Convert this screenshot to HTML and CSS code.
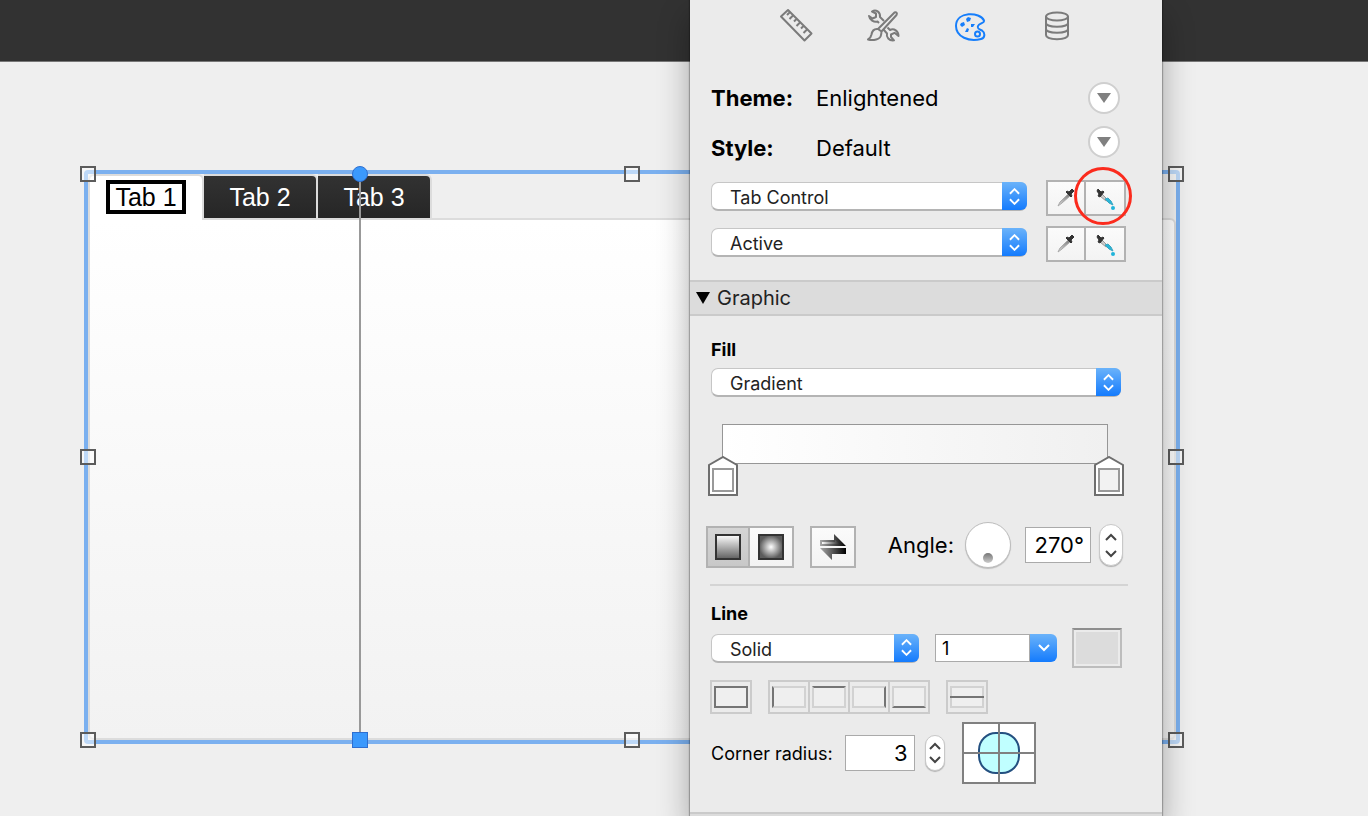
FILE: index.html
```
<!DOCTYPE html>
<html lang="en">
<head>
  <meta charset="UTF-8">
  <meta name="viewport" content="width=device-width, initial-scale=1.0">
  <title>Layout Inspector</title>
  <link rel="stylesheet" href="styles.css">
</head>
<body>
  <header class="layout-header"></header>

  <main class="canvas">
    <div class="tab-control">
      <div class="tabs">
        <button class="tab active"><span>Tab 1</span></button>
        <button class="tab">Tab 2</button>
        <button class="tab">Tab 3</button>
      </div>
      <div class="tab-body"></div>

      <!-- selection handles -->
      <div class="guide"></div>
      <i class="handle top left"></i>
      <i class="handle top center"></i>
      <i class="handle top right"></i>
      <i class="handle middle left"></i>
      <i class="handle middle right"></i>
      <i class="handle bottom left"></i>
      <i class="handle bottom center"></i>
      <i class="handle bottom right"></i>
    </div>
  </main>

  <aside class="inspector">
    <nav class="modes">
      <button aria-label="Position">
        <svg width="34" height="34" viewBox="0 0 34 34"><path d="M2 8.500 L9 2 L32.500 25.500 L25.500 32.500 Z M10.500 4.500 L8 7 M14 7.500 L10.500 11 M17.500 11 L15 13.500 M21 14.500 L17.500 18 M24.500 18 L22 20.500 M28 21.500 L24.500 25"/></svg>
      </button>
      <button aria-label="Styles">
        <svg width="34" height="34" viewBox="0 0 34 34"><path d="M13 15 L11.500 13.500 C8 14.500 3.500 12 3 8 L6.500 10.500 L10 9 V5.500 L6 3.500 C10 1 14.500 4 14 9 L18 13 M21.500 19.500 L24 22 C28 20 32.500 23 32.500 28 L28.500 24.800 L25 26.500 V29 L28 32.300 C23 33 20 29 21 25.500 L17.500 21.500"/><path d="M12 21 L28.500 4.500 C30.500 3.500 31.500 5.500 30.500 7 L15.500 23.500 M12 21 C8 20.500 6 23.500 5.500 26.500 C5 29 4 30.500 2 31.500 C7 33 14.500 31.500 15 27 Q15.500 25 15.500 23.500 Z"/></svg>
      </button>
      <button class="on" aria-label="Appearance">
        <svg width="34" height="34" viewBox="0 0 34 34"><path d="M31 12.500 C27 3.500 3 3 3 18 C3 29 16 34 28 31 C32 30 32.500 25 29 22.500 C26 21 24 21 25 18 C26 15.500 32 15 31 12.500 Z"/><circle cx="24.500" cy="26" r="2.500"/><path class="solid" d="M8 15 l3-1 1 3-3 2-2-2z M13 11 l2-2 3 1-1 3-3 1z M18 16 h4 l-2 3-2 0z M12 24 l2-4 2 1-1 3z"/></svg>
      </button>
      <button aria-label="Data">
        <svg width="34" height="34" viewBox="0 0 34 34"><ellipse cx="17" cy="8.500" rx="11" ry="4"/><path d="M6 8.500 V27 C6 32.500 28 32.500 28 27 V8.500 M6 15 C6 20 28 20 28 15 M6 21 C6 26 28 26 28 21"/></svg>
      </button>
    </nav>

    <section class="naming">
      <div class="name-row">
        <b>Theme:</b><span>Enlightened</span>
        <button class="round" aria-label="Change theme"><svg width="14" height="10" viewBox="0 0 14 10"><path d="M0 0 H14 L7 10 Z"/></svg></button>
      </div>
      <div class="name-row style-row">
        <b>Style:</b><span>Default</span>
        <button class="round" aria-label="Change style"><svg width="14" height="10" viewBox="0 0 14 10"><path d="M0 0 H14 L7 10 Z"/></svg></button>
      </div>
      <div class="pick-row">
        <div class="popup">
          <select aria-label="Object part"><option>Tab Control</option></select>
          <span class="cap"><svg width="11" height="17" viewBox="0 0 12 18"><path d="M1 6 L6 1 L11 6 M1 12 L6 17 L11 12"/></svg></span>
        </div>
        <div class="pickers">
          <button aria-label="Copy style"><svg width="24" height="24" viewBox="0 0 24 24"><use href="#dropper"/></svg></button>
          <button aria-label="Paste style"><svg width="24" height="24" viewBox="0 0 24 24"><use href="#dropper-full"/></svg></button>
          <i class="callout"></i>
        </div>
      </div>
      <div class="pick-row">
        <div class="popup">
          <select aria-label="State"><option>Active</option></select>
          <span class="cap"><svg width="11" height="17" viewBox="0 0 12 18"><path d="M1 6 L6 1 L11 6 M1 12 L6 17 L11 12"/></svg></span>
        </div>
        <div class="pickers">
          <button aria-label="Copy state style"><svg width="24" height="24" viewBox="0 0 24 24"><use href="#dropper"/></svg></button>
          <button aria-label="Paste state style"><svg width="24" height="24" viewBox="0 0 24 24"><use href="#dropper-full"/></svg></button>
        </div>
      </div>
    </section>

    <button class="section-title"><svg width="14" height="12" viewBox="0 0 14 12"><path d="M0 0 H14 L7 12 Z"/></svg>Graphic</button>

    <section class="fill">
      <label class="heading" for="fill">Fill</label>
      <div class="popup">
        <select id="fill"><option>Gradient</option></select>
        <span class="cap"><svg width="11" height="17" viewBox="0 0 12 18"><path d="M1 6 L6 1 L11 6 M1 12 L6 17 L11 12"/></svg></span>
      </div>

      <div class="gradient">
        <div class="gradient-bar"></div>
        <div class="stops">
          <button aria-label="Start color"><svg width="30" height="40" viewBox="0 0 30 40"><path class="pin" d="M1 39 V9 L15 1 L29 9 V39 Z"/><rect x="5" y="13" width="20" height="22" fill="#fff"/></svg></button>
          <button aria-label="End color"><svg width="30" height="40" viewBox="0 0 30 40"><path class="pin" d="M1 39 V9 L15 1 L29 9 V39 Z"/><rect x="5" y="13" width="20" height="22" fill="#f2f2f2"/></svg></button>
        </div>
      </div>

      <div class="angle-row">
        <div class="kinds">
          <button class="on" aria-label="Linear"><i class="linear"></i></button>
          <button aria-label="Radial"><i class="radial"></i></button>
        </div>
        <button class="swap" aria-label="Reverse">
          <svg width="26" height="26" viewBox="0 0 26 26">
            <defs>
              <linearGradient id="g1"><stop offset="0" stop-color="#aaa"/><stop offset="1"/></linearGradient>
              <linearGradient id="g2"><stop offset="0" stop-color="#fff"/><stop offset="1" stop-color="#222"/></linearGradient>
            </defs>
            <path fill="url(#g1)" d="M0 6 H14 V0 L26 12 H0 Z"/>
            <path fill="url(#g2)" d="M2 8 H15 V6 L20 10 H2 Z"/>
            <path fill="url(#g1)" d="M26 14 H0 L12 26 V20 H26 Z"/>
          </svg>
        </button>
        <label class="angle-label" for="angle">Angle:</label>
        <button class="dial" aria-label="Angle dial"><i></i></button>
        <input class="angle" id="angle" value="270°">
        <div class="stepper">
          <button aria-label="Increase angle"><svg width="12" height="8" viewBox="0 0 12 8"><path d="M1 7 L6 2 L11 7"/></svg></button>
          <button aria-label="Decrease angle"><svg width="12" height="8" viewBox="0 0 12 8"><path d="M1 1 L6 6 L11 1"/></svg></button>
        </div>
      </div>
    </section>

    <section class="line">
      <label class="heading" for="line">Line</label>
      <div class="line-row">
        <div class="popup">
          <select id="line"><option>Solid</option></select>
          <span class="cap"><svg width="11" height="17" viewBox="0 0 12 18"><path d="M1 6 L6 1 L11 6 M1 12 L6 17 L11 12"/></svg></span>
        </div>
        <div class="combo">
          <input value="1" aria-label="Line width">
          <button class="cap" aria-label="Choose width"><svg width="12" height="8" viewBox="0 0 12 8"><path d="M1 1 L6 6 L11 1"/></svg></button>
        </div>
        <button class="swatch" aria-label="Line color"><i></i></button>
      </div>

      <div class="borders">
        <div><button aria-label="All borders"><i class="all"></i></button></div>
        <div>
          <button aria-label="Left border"><i class="l"></i></button>
          <button aria-label="Top border"><i class="t"></i></button>
          <button aria-label="Right border"><i class="r"></i></button>
          <button aria-label="Bottom border"><i class="b"></i></button>
        </div>
        <div><button aria-label="Between border"><i class="mid"></i></button></div>
      </div>

      <div class="radius-row">
        <label for="radius">Corner radius:</label>
        <input class="radius" id="radius" value="3">
        <div class="stepper small">
          <button aria-label="Increase radius"><svg width="12" height="8" viewBox="0 0 12 8"><path d="M1 7 L6 2 L11 7"/></svg></button>
          <button aria-label="Decrease radius"><svg width="12" height="8" viewBox="0 0 12 8"><path d="M1 1 L6 6 L11 1"/></svg></button>
        </div>
        <button class="corners" aria-label="Corners">
          <svg width="74" height="62" viewBox="0 0 74 62"><rect x="1" y="1" width="72" height="60" fill="#fff" stroke="#808080" stroke-width="2"/><rect x="17" y="11" width="40" height="40" rx="17" fill="#c0ffff" stroke="#245080" stroke-width="2"/><path d="M37 1 V61 M1 31 H73" stroke="#808080" stroke-width="2"/></svg>
        </button>
      </div>
    </section>

    <div class="next-section"></div>
  </aside>

  <svg class="symbols" width="0" height="0">
    <defs>
      <linearGradient id="glass" x1="1" y1="0" x2="0" y2="1"><stop offset="0" stop-color="#777"/><stop offset="1" stop-color="#ddd"/></linearGradient>
      <g id="dropper">
        <path d="M14 8 L16 10 L8 17 L4 20 L6 16 Z" fill="url(#glass)" stroke="#aaa" stroke-width="1"/>
        <path d="M12 6 L13 5 L15 6 L18 3 L20 5 L17 8 L18 10 L17 11 Z" fill="#333" stroke="#333" stroke-width="1"/>
      </g>
      <g id="dropper-full">
        <path d="M9 8 L15 14 L13 15 L7 10 Z" fill="#ccc" stroke="#999" stroke-width="1"/>
        <path d="M12 13 L15 12 L18 15 L20 19 L16 17 Z" fill="#29b6d8" stroke="#3aa5c0" stroke-width="1"/>
        <path d="M4 5 L5 3 L8 6 L10 5 L11 6 L7 11 L5 10 L6 8 Z" fill="#333" stroke="#333" stroke-width="1"/>
        <circle cx="20" cy="22" r="2" fill="#20b4da"/>
      </g>
    </defs>
  </svg>
</body>
</html>
```

FILE: styles.css
```
*, *::before, *::after {
  box-sizing: border-box;
}

body {
  margin: 0;
  min-height: 100vh;
  display: flex;
  flex-direction: column;
  position: relative;
  overflow: hidden;
  background: #efefef;
  color: #000;
  font-family: Inter, "Liberation Sans", sans-serif;
  font-size: 18px;
}

button, input, select {
  font: inherit;
  color: inherit;
  margin: 0;
  padding: 0;
  border: 0;
  border-radius: 0;
  background: none;
  outline: none;
}

button {
  display: flex;
  align-items: center;
  justify-content: center;
}

svg {
  display: block;
}

.symbols {
  position: absolute;
}

/* layout canvas */
.layout-header {
  height: 62px;
  background: #323232;
  border-bottom: 1px solid #777;
}

.canvas {
  flex: 1;
  display: flex;
  padding: 108px 188px 72px 84px;
}

.tab-control {
  flex: 1;
  display: flex;
  flex-direction: column;
  position: relative;
  border: 4px solid #7bb0ef;
  border-radius: 4px;
  font-family: "Liberation Sans", Arial, sans-serif;
  font-size: 25px;
}

.tabs {
  display: flex;
}

.tab {
  width: 114px;
  height: 44px;
  border: solid #dcdcdc;
  border-width: 2px 2px 0 0;
  border-radius: 0 6px 0 0;
  background: linear-gradient(#323232, #262626);
  color: #fff;
}

.tab.active {
  width: 116px;
  height: 46px;
  margin-bottom: -2px;
  padding-bottom: 2px;
  border-left-width: 2px;
  border-radius: 6px 6px 0 0;
  background: #fff;
  color: #000;
  z-index: 1;
}

.tab.active span {
  border: 4px solid #000;
  padding: 0 5px;
  line-height: 26px;
}

.tab-body {
  flex: 1;
  border: 2px solid #dcdcdc;
  border-radius: 0 6px 6px 6px;
  background: linear-gradient(#fff, #f2f2f2);
}

.handle {
  position: absolute;
  width: 16px;
  height: 16px;
  border: 2px solid #5c5c5c;
  background: rgba(255, 255, 255, 0.5);
  z-index: 2;
}

.handle.top { top: -8px; }
.handle.bottom { bottom: -8px; }
.handle.left { left: -8px; }
.handle.right { right: -8px; }
.handle.center { left: calc(50% - 8px); }
.handle.middle { top: calc(50% - 8px); }

.guide {
  position: absolute;
  top: 0;
  bottom: 0;
  left: 25%;
  width: 2px;
  margin-left: -1px;
  background: #999;
  z-index: 2;
}

.guide::before, .guide::after {
  content: "";
  position: absolute;
  left: -7px;
  width: 16px;
  height: 16px;
  background: #3b99fc;
  border: 1px solid #2f6fd0;
}

.guide::before {
  top: -8px;
  border-radius: 50%;
}

.guide::after {
  bottom: -8px;
}

/* inspector */
.inspector {
  position: absolute;
  top: 0;
  bottom: 0;
  left: 690px;
  width: 472px;
  z-index: 5;
  display: flex;
  flex-direction: column;
  background: #ebebeb;
  box-shadow: 0 0 1px 1px rgba(0, 0, 0, 0.25), 0 16px 30px rgba(0, 0, 0, 0.32);
}

.inspector > * {
  flex-shrink: 0;
}

.modes {
  display: flex;
  justify-content: center;
  gap: 53px;
  padding: 8px 0 40px;
}

.modes svg {
  fill: none;
  stroke: #7b7b7b;
  stroke-width: 2;
  stroke-linejoin: round;
}

.modes .on svg {
  stroke: #167efb;
}

.modes .solid {
  fill: #167efb;
  stroke: none;
}

.naming {
  padding: 0 36px 18px 21px;
}

.name-row {
  display: flex;
  align-items: center;
  height: 32px;
  padding-right: 6px;
  font-size: 22px;
}

.name-row b {
  width: 105px;
}

.style-row {
  margin: 12px 0 22px;
}

.style-row b, .style-row span {
  padding-top: 12px;
}

.round {
  width: 32px;
  height: 32px;
  margin-left: auto;
  border: 2px solid #cfcfcf;
  border-radius: 50%;
  background: #fff;
}

.round svg {
  fill: #808080;
}

.pick-row {
  display: flex;
  align-items: flex-start;
  gap: 19px;
}

.pick-row + .pick-row {
  margin-top: 10px;
}

.popup {
  flex: 1;
  display: grid;
  height: 29px;
  margin-top: 2px;
}

.popup select, .popup .cap {
  grid-area: 1 / 1;
}

.popup select {
  appearance: none;
  width: 100%;
  padding: 3px 30px 0 18px;
  border: 1px solid #c6c6c6;
  border-bottom: 2px solid #b4b4b4;
  border-radius: 7px;
  background: #fff;
  color: #222;
}

.cap {
  display: flex;
  align-items: center;
  justify-content: center;
  width: 25px;
  height: 28px;
  border-radius: 0 6px 6px 0;
  background: linear-gradient(#6bb3fa, #147bfd);
}

.popup .cap {
  justify-self: end;
  pointer-events: none;
}

.cap svg {
  fill: none;
  stroke: #fff;
  stroke-width: 2;
}

.pickers {
  display: flex;
  position: relative;
}

.pickers button, .kinds button, .swap {
  border: 2px solid #b2b2b2;
  background: linear-gradient(#fbfbfb, #f3f3f3);
}

.pickers button {
  width: 42px;
  height: 36px;
}

.pickers button:first-child {
  border-right: 0;
  width: 38px;
}

.callout {
  position: absolute;
  left: 28px;
  top: -13px;
  width: 58px;
  height: 58px;
  border: 3px solid #fb2b1d;
  border-radius: 50%;
}

.section-title {
  justify-content: flex-start;
  gap: 7px;
  height: 36px;
  padding-left: 6px;
  border: solid #cacaca;
  border-width: 2px 0;
  background: #dcdcdc;
  color: #222;
  font-size: 20px;
}

.section-title svg {
  fill: #000;
}

.heading {
  display: block;
  padding-left: 1px;
  font-weight: bold;
  line-height: 24px;
}

.fill {
  margin: 22px 34px 0 20px;
  padding-bottom: 16px;
  border-bottom: 2px solid #d4d4d4;
}

.fill .popup {
  margin: 6px 7px 0 1px;
}

.gradient {
  margin: 27px 4px 26px -2px;
}

.gradient-bar {
  height: 40px;
  margin: 0 16px 0 14px;
  border: 1px solid #969696;
  background: linear-gradient(to right, #fff, #f0f0f0);
}

.stops {
  display: flex;
  justify-content: space-between;
  margin-top: -8px;
}

.stops svg {
  fill: #fff;
  stroke: #999;
  stroke-width: 2;
}

.stops .pin {
  stroke: #6e6e6e;
}

.angle-row {
  display: flex;
  align-items: center;
  height: 46px;
  margin: 0 5px 0 -4px;
}

.kinds {
  display: flex;
}

.kinds, .swap {
  margin-top: 4px;
}

.kinds button, .swap {
  width: 46px;
  height: 42px;
}

.kinds button:first-child {
  width: 44px;
}

.kinds button + button {
  width: 44px;
  border-left: 0;
}

.kinds .on {
  background: linear-gradient(#d5d5d5, #c8c8c8);
}

.kinds i {
  width: 26px;
  height: 26px;
  border: 2px solid #333;
}

.linear {
  background: linear-gradient(#f8f8f8, #666);
}

.radial {
  background: radial-gradient(circle, #fff, #5c5c5c 75%);
}

.swap {
  margin-left: 16px;
}

.angle-label {
  margin-left: auto;
  font-size: 22px;
}

.dial {
  width: 46px;
  height: 46px;
  margin: 0 14px 0 11px;
  padding-bottom: 4px;
  align-items: flex-end;
  border: 1px solid #bdbdbd;
  border-radius: 50%;
  background: #fff;
  box-shadow: 0 1px 1px rgba(0, 0, 0, 0.2);
}

.dial i {
  width: 10px;
  height: 10px;
  border-radius: 50%;
  background: linear-gradient(#777, #ccc);
}

.angle, .radius, .combo input {
  border: 1px solid #aaa;
  background: #fff;
}

.angle, .radius {
  height: 36px;
  text-align: right;
  padding-right: 6px;
  font-size: 22px;
}

.angle {
  width: 66px;
}

.stepper {
  display: flex;
  flex-direction: column;
  width: 24px;
  height: 42px;
  margin-left: 8px;
  padding: 3px 0;
  border: 1px solid #c8c8c8;
  border-radius: 12px;
  background: #fff;
  box-shadow: 0 1px 1px rgba(0, 0, 0, 0.25);
}

.stepper button {
  flex: 1;
}

.stepper svg {
  fill: none;
  stroke: #444;
  stroke-width: 2;
}

.line {
  padding: 16px 34px 0 20px;
}

.line-row {
  display: flex;
  align-items: center;
  margin: 2px 6px 12px 1px;
  height: 40px;
}

.line-row .popup {
  margin: 0;
}

.combo {
  display: flex;
  width: 122px;
  margin: 0 15px 0 16px;
}

.combo input {
  flex: 1;
  min-width: 0;
  height: 28px;
  padding-left: 6px;
}

.combo .cap {
  width: 27px;
}

.swatch {
  width: 50px;
  height: 40px;
  border: 2px solid #bdbdbd;
  border-top-color: #8e8e8e;
  padding: 2px;
}

.swatch i {
  width: 42px;
  height: 32px;
  background: #dcdcdc;
}

.borders {
  display: flex;
  gap: 16px;
}

.borders div {
  display: flex;
}

.borders button {
  width: 42px;
  height: 34px;
  border: 2px solid #cbcbcb;
}

.borders button + button {
  width: 40px;
  border-left: 0;
}

.borders i {
  width: 34px;
  height: 22px;
  border: 2px solid #d2d2d2;
  background: #efefef;
}

.borders .all { border-color: #757575; }
.borders .l { border-left-color: #757575; }
.borders .t { border-top-color: #757575; }
.borders .r { border-right-color: #757575; }
.borders .b { border-bottom-color: #757575; }

.borders .mid {
  display: flex;
  align-items: center;
}

.mid::before {
  content: "";
  flex: 1;
  height: 2px;
  margin: 0 -2px;
  background: #757575;
}

.radius-row {
  display: flex;
  align-items: center;
  padding: 8px 0 0 1px;
}

.radius {
  width: 70px;
  margin-left: 12px;
}

.stepper.small {
  width: 20px;
  height: 36px;
  margin: 0 17px 0 10px;
}

.next-section {
  flex: 1;
  margin-top: 28px;
  border-top: 2px solid #cacaca;
  background: #dcdcdc;
}
```
